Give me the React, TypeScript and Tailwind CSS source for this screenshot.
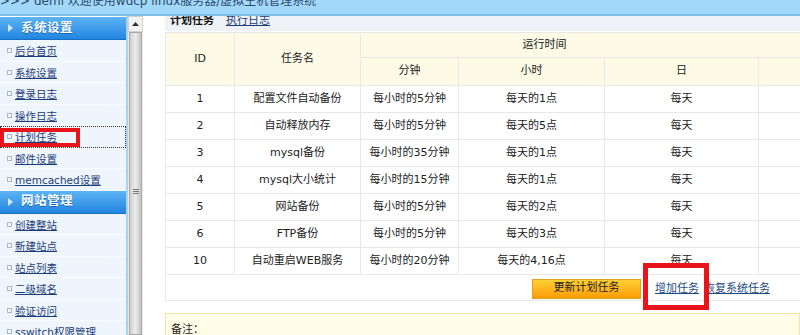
import React from 'react';

interface TaskRow {
  id: string;
  name: string;
  minute: string;
  hour: string;
  day: string;
}

const tasks: TaskRow[] = [
  { id: '1', name: '配置文件自动备份', minute: '每小时的5分钟', hour: '每天的1点', day: '每天' },
  { id: '2', name: '自动释放内存', minute: '每小时的5分钟', hour: '每天的5点', day: '每天' },
  { id: '3', name: 'mysql备份', minute: '每小时的35分钟', hour: '每天的1点', day: '每天' },
  { id: '4', name: 'mysql大小统计', minute: '每小时的15分钟', hour: '每天的1点', day: '每天' },
  { id: '5', name: '网站备份', minute: '每小时的5分钟', hour: '每天的2点', day: '每天' },
  { id: '6', name: 'FTP备份', minute: '每小时的5分钟', hour: '每天的3点', day: '每天' },
  { id: '10', name: '自动重启WEB服务', minute: '每小时的20分钟', hour: '每天的4,16点', day: '每天' },
];

const systemMenu = ['后台首页', '系统设置', '登录日志', '操作日志', '计划任务', '邮件设置', 'memcached设置'];
const siteMenu = ['创建整站', '新建站点', '站点列表', '二级域名', '验证访问', 'sswitch权限管理'];

const MenuHeader = ({ title }: { title: string }) => (
  <div className="h-[23px] flex items-center bg-gradient-to-b from-[#5cb3f5] to-[#1f86e0] border-b border-[#1a70c0]">
    <svg width="6" height="8" viewBox="0 0 6 8" className="ml-[8px] mr-[7px]">
      <path d="M0 0 L5 4 L0 8 Z" fill="#cfe8ff" />
    </svg>
    <span className="text-white font-bold text-[12.5px] tracking-[0.5px] [text-shadow:0_1px_0_#1564b0]">{title}</span>
  </div>
);

const MenuItem = ({ label, active }: { label: string; active?: boolean }) => (
  <div
    className={`h-[21.5px] flex items-center border-b border-[#f8fbff] ${
      active ? 'outline-1 outline-dotted outline-[#333] -outline-offset-1' : ''
    }`}
  >
    <span className="ml-[7px] mr-[3px] mt-[1px] w-[5px] h-[5px] border border-[#a9b7c6] bg-[#f4f7fa]" />
    <a className="mt-[2px] text-[10.5px] text-[#1c3c78] underline leading-none">{label}</a>
  </div>
);

export default function App() {
  return (
    <div className="relative w-[800px] h-[335px] overflow-hidden bg-white font-['DejaVu_Sans','Noto_Sans_CJK_SC',sans-serif] text-[11px] text-[#222]">
      {/* top bar */}
      <div className="h-[16px] bg-[#a2d8fb] border-b-2 border-[#7cc0ea] overflow-hidden">
        <div className="-mt-[6px] leading-[14px] text-[12px] text-[#2c4a66] whitespace-nowrap">
          &gt;&gt;&gt; demi 欢迎使用wdcp linux服务器/虚拟主机管理系统
        </div>
      </div>

      <div className="flex h-[319px]">
        {/* sidebar */}
        <aside className="w-[128px] shrink-0 bg-[#eef5fd] border-r-2 border-[#a9d3f3] overflow-hidden">
          <div className="h-[1px] bg-white" />
          <MenuHeader title="系统设置" />
          {systemMenu.map(m => (
            <MenuItem key={m} label={m} active={m === '计划任务'} />
          ))}
          <MenuHeader title="网站管理" />
          {siteMenu.map(m => (
            <MenuItem key={m} label={m} />
          ))}
        </aside>

        {/* scrollbar */}
        <div className="w-[15px] shrink-0 flex flex-col bg-[#ececec]">
          <div className="h-[16px] flex items-center justify-center bg-[#f3f3f3] border border-[#d0d0d0]">
            <svg width="7" height="4" viewBox="0 0 7 4">
              <path d="M0 4 L3.5 0 L7 4 Z" fill="#333" />
            </svg>
          </div>
          <div className="flex-1 mx-[1px] border border-[#a8a8a8] bg-gradient-to-r from-[#cfcfcf] via-[#ececec] to-[#c2c2c2] flex flex-col items-center pt-[156px]">
            <div className="w-[6px] flex flex-col gap-[1px]">
              <div className="h-[1px] bg-[#777]" />
              <div className="h-[1px] bg-[#777]" />
              <div className="h-[1px] bg-[#777]" />
            </div>
          </div>
        </div>

        {/* main */}
        <main className="flex-1 overflow-hidden pl-[22px]">
          <div className="h-[15px] bg-[#eef1f6] overflow-hidden flex items-start gap-[12px] pl-[5px] whitespace-nowrap">
            <span className="-mt-[2px] leading-[13px] font-bold text-[#111]">计划任务</span>
            <a className="-mt-[2px] leading-[13px] text-[#1c3c78] underline">执行日志</a>
          </div>

          <table className="mt-[1px] table-fixed border-collapse border border-[#e3e3e3] w-[713px] text-center">
            <colgroup>
              <col className="w-[69px]" />
              <col className="w-[126px]" />
              <col className="w-[98px]" />
              <col className="w-[146px]" />
              <col className="w-[154px]" />
              <col className="w-[120px]" />
            </colgroup>
            <thead className="bg-[#fdfbe6]">
              <tr className="h-[25px]">
                <th rowSpan={2} className="font-normal border border-[#e8e8e8]">ID</th>
                <th rowSpan={2} className="font-normal border border-[#e8e8e8]">任务名</th>
                <th colSpan={4} className="font-normal border border-[#e8e8e8] pr-[150px]">运行时间</th>
              </tr>
              <tr className="h-[28px]">
                <th className="font-normal border border-[#e8e8e8]">分钟</th>
                <th className="font-normal border border-[#e8e8e8]">小时</th>
                <th className="font-normal border border-[#e8e8e8]">日</th>
                <th className="font-normal border border-[#e8e8e8]"></th>
              </tr>
            </thead>
            <tbody>
              {tasks.map(t => (
                <tr key={t.id} className="h-[27px]">
                  <td className="border border-[#e8e8e8]">{t.id}</td>
                  <td className="border border-[#e8e8e8]">{t.name}</td>
                  <td className="border border-[#e8e8e8]">{t.minute}</td>
                  <td className="border border-[#e8e8e8]">{t.hour}</td>
                  <td className="border border-[#e8e8e8]">{t.day}</td>
                  <td className="border border-[#e8e8e8]"></td>
                </tr>
              ))}
              <tr className="h-[26px]">
                <td colSpan={6} className="border border-[#e8e8e8] text-left pl-[366px]">
                  <div className="flex items-center whitespace-nowrap">
                    <button className="w-[109px] h-[20px] mt-[2px] border border-[#e0a020] bg-gradient-to-b from-[#ffcf33] to-[#ff9c00] text-[11px] text-[#222]">
                      更新计划任务
                    </button>
                    <a className="ml-[14px] mt-[4px] text-[#1c4a86] underline">增加任务</a>
                    <a className="ml-[5px] mt-[4px] text-[#1c4a86] underline">恢复系统任务</a>
                  </div>
                </td>
              </tr>
            </tbody>
          </table>

          <div className="mt-[12px] h-[40px] bg-[#fffde8] border border-[#f0e4a4] pl-[5px] pt-[8px]">
            备注：
          </div>
        </main>
      </div>

      {/* red annotation boxes */}
      <div className="absolute left-0 top-[128px] w-[80px] h-[19px] border-[4px] border-[#e8141c]" />
      <div className="absolute left-[643px] top-[263px] w-[66px] h-[47px] border-[5px] border-[#e8141c]" />
    </div>
  );
}
